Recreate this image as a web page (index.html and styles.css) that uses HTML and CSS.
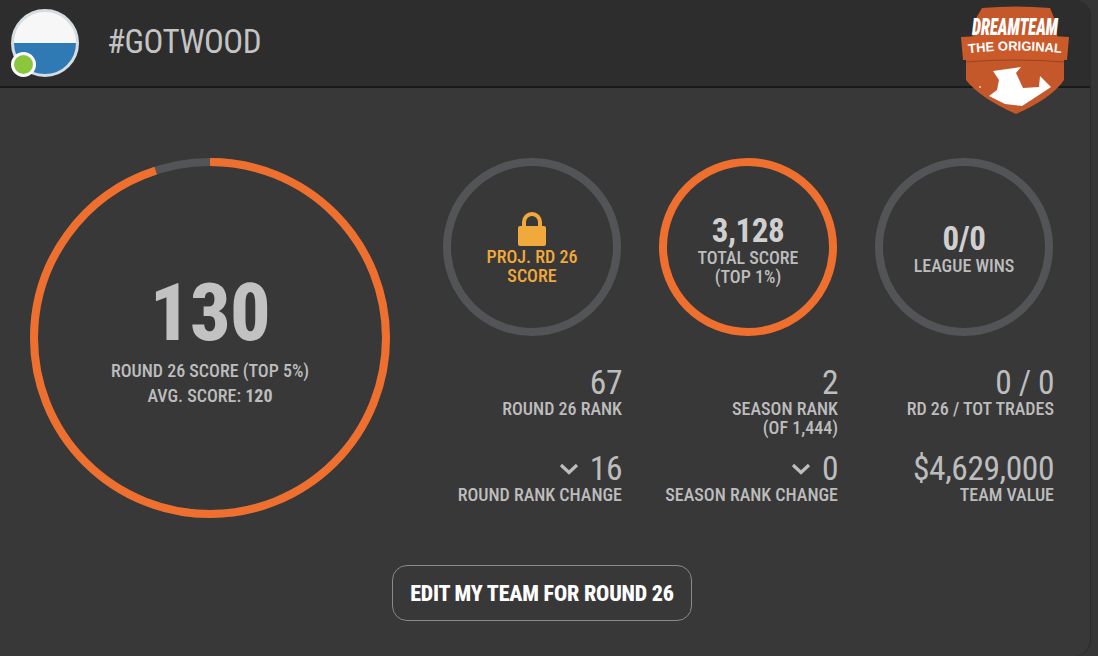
FILE: index.html
```html
<!DOCTYPE html>
<html lang="en">
<head>
    <meta charset="UTF-8">
    <meta name="viewport" content="width=device-width, initial-scale=1.0">
    <title>#GOTWOOD</title>
    <link rel="stylesheet" href="styles.css">
</head>
<body>
    <div class="card">
        <header class="card-head">
            <div class="avatar">
                <span class="avatar-dot"></span>
            </div>
            <h1 class="team-name">#GOTWOOD</h1>
            <svg class="logo" viewBox="0 0 158 125" width="158" height="125">
                <defs>
                    <path id="logoArc" d="M22 54 Q75 47 128 54"/>
                </defs>
                <path d="M42 8 Q76 5 110 8 L115 20 L118 40 H32 L35 20 Z" fill="#c5582a"/>
                <path d="M26 58 H124 V80 Q112 98 76 114 Q40 98 26 80 Z" fill="#c5582a"/>
                <path d="M21 37 Q75 33 129 37 L127 60 Q75 58 23 60 Z" fill="#cb5a2b"/>
                <path d="M26 62 Q75 58 124 62" fill="none" stroke="#9a4522" stroke-width="1"/>
                <text class="logo-top" x="75" y="35" textLength="86" lengthAdjust="spacingAndGlyphs">DREAMTEAM</text>
                <text class="logo-sub"><textPath href="#logoArc" startOffset="50%">THE ORIGINAL</textPath></text>
                <path d="M53 71 L81 67 L76 73 L83 88 L99 87 L100 76 L111 87 L102 93 L82 106 L65 104 L49 96 L57 90 L59 80 Z" fill="#fff"/>
                <circle cx="40" cy="87" r="1" fill="#f3c9b0"/>
            </svg>
        </header>
        <main class="card-body">
            <div class="stats">
                <div class="main-ring ring">
                    <svg viewBox="0 0 360 360" width="360" height="360">
                        <circle class="track" cx="180" cy="180" r="176"/>
                        <circle class="progress" cx="180" cy="180" r="176" pathLength="100" stroke-dasharray="95 100" transform="rotate(-90 180 180)"/>
                    </svg>
                    <div class="ring-text main-text">
                        <div class="main-score">130</div>
                        <div class="main-label">ROUND 26 SCORE (TOP 5%)</div>
                        <div class="main-label">AVG. SCORE: <b>120</b></div>
                    </div>
                </div>
                <div class="side">
                    <div class="ring-row">
                        <div class="small-ring ring">
                            <svg viewBox="0 0 178 178" width="178" height="178"><circle class="track" cx="89" cy="89" r="85"/></svg>
                            <div class="ring-text locked">
                                <svg class="lock" viewBox="0 0 30 36" width="30" height="36">
                                    <path d="M7 18 V11 a8 8 0 0 1 16 0 V18" fill="none" stroke="#f2a93b" stroke-width="4"/>
                                    <rect x="1" y="15" width="28" height="20" rx="2" fill="#f2a93b"/>
                                </svg>
                                <div class="ring-label">PROJ. RD 26<br>SCORE</div>
                            </div>
                        </div>
                        <div class="small-ring ring">
                            <svg viewBox="0 0 178 178" width="178" height="178"><circle class="progress" cx="89" cy="89" r="85"/></svg>
                            <div class="ring-text total">
                                <div class="ring-value">3,128</div>
                                <div class="ring-label">TOTAL SCORE<br>(TOP 1%)</div>
                            </div>
                        </div>
                        <div class="small-ring ring">
                            <svg viewBox="0 0 178 178" width="178" height="178"><circle class="track" cx="89" cy="89" r="85"/></svg>
                            <div class="ring-text wins">
                                <div class="ring-value">0/0</div>
                                <div class="ring-label">LEAGUE WINS</div>
                            </div>
                        </div>
                    </div>
                    <div class="figures">
                        <div class="figure">
                            <div class="figure-value">67</div>
                            <div class="figure-label">ROUND 26 RANK</div>
                        </div>
                        <div class="figure">
                            <div class="figure-value">2</div>
                            <div class="figure-label">SEASON RANK<br>(OF 1,444)</div>
                        </div>
                        <div class="figure">
                            <div class="figure-value">0 / 0</div>
                            <div class="figure-label">RD 26 / TOT TRADES</div>
                        </div>
                        <div class="figure">
                            <div class="figure-value"><svg class="chevron" viewBox="0 0 20 12" width="20" height="12"><path d="M2 2 L10 9.5 L18 2" fill="none" stroke="#bdbdbd" stroke-width="3.2"/></svg>16</div>
                            <div class="figure-label">ROUND RANK CHANGE</div>
                        </div>
                        <div class="figure">
                            <div class="figure-value"><svg class="chevron" viewBox="0 0 20 12" width="20" height="12"><path d="M2 2 L10 9.5 L18 2" fill="none" stroke="#bdbdbd" stroke-width="3.2"/></svg>0</div>
                            <div class="figure-label">SEASON RANK CHANGE</div>
                        </div>
                        <div class="figure">
                            <div class="figure-value">$4,629,000</div>
                            <div class="figure-label">TEAM VALUE</div>
                        </div>
                    </div>
                </div>
            </div>
            <div class="actions">
                <button class="edit-button" type="button">EDIT MY TEAM FOR ROUND 26</button>
            </div>
        </main>
    </div>
</body>
</html>
```
FILE: styles.css
```css
body {
    margin: 0;
    background-color: #363636;
    font-family: "Roboto Condensed", Roboto, "Liberation Sans", sans-serif;
    font-stretch: 75%;
    color: #bdbdbd;
    height: 656px;
    overflow: hidden;
}
.card {
    width: 1090px;
    height: 656px;
    background-color: #383838;
    border-radius: 0 16px 16px 0;
    box-shadow: 1px 0 0 #2a2a2a;
    overflow: hidden;
}
.card-head {
    position: relative;
    display: flex;
    align-items: center;
    height: 86px;
    padding-left: 11px;
    background-color: #2d2d2d;
    border-bottom: 2px solid #191919;
}
.avatar {
    position: relative;
    width: 62px;
    height: 62px;
    border: 3px solid #d3dde2;
    border-radius: 50%;
    background: linear-gradient(#f7f7f7 50%, #2f7ab5 50%);
    flex: none;
}
.avatar-dot {
    position: absolute;
    left: -3px;
    bottom: -3px;
    width: 19px;
    height: 19px;
    border: 3px solid #fff;
    border-radius: 50%;
    background-color: #8cc63f;
}
.team-name {
    margin: 0 0 4px 28px;
    font-size: 33px;
    font-weight: 450;
    letter-spacing: -0.5px;
    color: #c4c4c4;
}
.logo {
    position: absolute;
    top: 0;
    left: 940px;
}
.logo-top {
    font-size: 24px;
    font-weight: 900;
    font-style: italic;
    fill: #fff;
    text-anchor: middle;
}
.logo-sub {
    font-family: "Liberation Sans", sans-serif;
    font-stretch: normal;
    font-size: 13px;
    font-weight: 700;
    fill: #fff;
    text-anchor: middle;
}
.card-body {
    padding-top: 70px;
}
.stats {
    display: flex;
    padding-left: 30px;
}
.ring {
    position: relative;
    flex: none;
}
.ring svg {
    display: block;
}
.ring circle {
    fill: none;
    stroke-width: 8;
}
.track {
    stroke: #535458;
}
.progress {
    stroke: #ef6f2e;
}
.ring-text {
    position: absolute;
    inset: 0;
    display: flex;
    flex-direction: column;
    align-items: center;
    justify-content: center;
    text-align: center;
}
.main-text {
    padding-bottom: 14px;
}
.main-score {
    font-size: 80px;
    font-weight: 800;
    letter-spacing: -0.5px;
    line-height: 80px;
    color: #c2c2c2;
    margin-bottom: 5px;
}
.main-label {
    font-size: 18px;
    font-weight: 470;
    line-height: 25px;
}
.main-label b {
    font-weight: 700;
}
.side {
    margin-left: 53px;
    width: 611px;
}
.ring-row {
    display: flex;
    gap: 38px;
}
.ring-value {
    font-size: 33px;
    font-weight: 700;
    letter-spacing: -0.5px;
    line-height: 34px;
    color: #d0d0d0;
}
.ring-label {
    font-size: 18px;
    font-weight: 470;
    line-height: 19px;
}
.locked {
    color: #f2a93b;
    padding-top: 2px;
}
.total {
    padding-top: 6px;
}
.wins {
    padding-top: 3px;
}
.figures {
    display: grid;
    grid-template-columns: repeat(3, 179px);
    column-gap: 37px;
    margin-top: 29px;
}
.figure {
    text-align: right;
    height: 86px;
}
.figure-value {
    padding-top: 1px;
    font-size: 33.5px;
    font-weight: 430;
    letter-spacing: -0.45px;
    line-height: 33px;
    display: flex;
    justify-content: flex-end;
    align-items: center;
}
.chevron {
    margin-right: 11px;
}
.figure-label {
    font-size: 18px;
    font-weight: 470;
    line-height: 19px;
}
.actions {
    padding-left: 392px;
    margin-top: 28px;
}
.edit-button {
    width: 300px;
    height: 56px;
    padding: 0;
    background: none;
    border: 1px solid #8a8a8a;
    border-radius: 15px;
    color: #fff;
    font-family: inherit;
    font-stretch: inherit;
    font-size: 22px;
    font-weight: 800;
    letter-spacing: -0.2px;
}
```
